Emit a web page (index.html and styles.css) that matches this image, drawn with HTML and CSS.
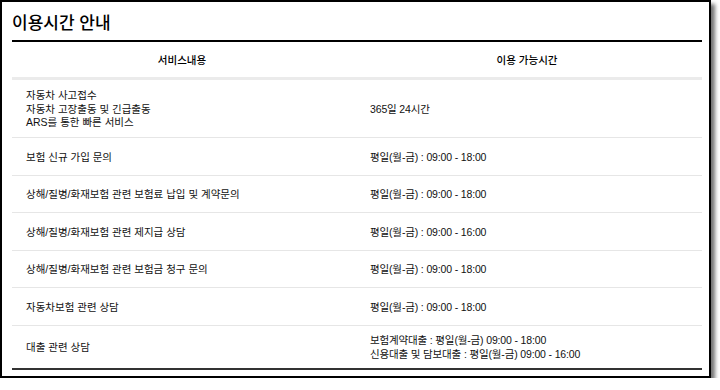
FILE: index.html
```html
<!DOCTYPE html>
<html lang="ko">
<head>
<meta charset="utf-8">
<link rel="stylesheet" href="styles.css">
</head>
<body>
<div class="frame">
  <h2 class="title">이용시간 안내</h2>
  <table class="hours">
    <thead>
      <tr><th class="c1">서비스내용</th><th class="c2">이용 가능시간</th></tr>
    </thead>
    <tbody>
      <tr class="tall"><td class="c1">자동차 사고접수<br>자동차 고장출동 및 긴급출동<br>ARS를 통한 빠른 서비스</td><td class="c2">365일 24시간</td></tr>
      <tr><td class="c1">보험 신규 가입 문의</td><td class="c2">평일(월-금) : 09:00 - 18:00</td></tr>
      <tr><td class="c1">상해/질병/화재보험 관련 보험료 납입 및 계약문의</td><td class="c2">평일(월-금) : 09:00 - 18:00</td></tr>
      <tr><td class="c1">상해/질병/화재보험 관련 제지급 상담</td><td class="c2">평일(월-금) : 09:00 - 16:00</td></tr>
      <tr><td class="c1">상해/질병/화재보험 관련 보험금 청구 문의</td><td class="c2">평일(월-금) : 09:00 - 18:00</td></tr>
      <tr><td class="c1">자동차보험 관련 상담</td><td class="c2">평일(월-금) : 09:00 - 18:00</td></tr>
      <tr class="last"><td class="c1">대출 관련 상담</td><td class="c2">보험계약대출 : 평일(월-금) 09:00 - 18:00<br>신용대출 및 담보대출 : 평일(월-금) 09:00 - 16:00</td></tr>
    </tbody>
  </table>
</div>
</body>
</html>
```

FILE: styles.css
```css
html, body {
  margin: 0;
  padding: 0;
  background: #fff;
}
body {
  font-family: "Liberation Sans", "Noto Sans CJK KR", sans-serif;
  color: #111;
}
.frame {
  box-sizing: border-box;
  width: 711px;
  height: 378px;
  border: 2px solid #000;
  padding: 0 0 0 10px;
  box-shadow: 4px 4px 4px rgba(0, 0, 0, 0.55);
}
.title {
  margin: 0;
  padding-top: 9px;
  height: 38px;
  box-sizing: border-box;
  font-family: "Noto Sans CJK KR", sans-serif;
  font-size: 17px;
  font-weight: 500;
  line-height: 22px;
  color: #000;
}
.hours {
  width: 690px;
  border-collapse: collapse;
  border-top: 2px solid #000;
  border-bottom: 2px solid #333;
  font-size: 10.5px;
  line-height: 13.5px;
}
.hours th {
  height: 35px;
  padding: 0;
  font-family: "Noto Sans CJK KR", sans-serif;
  font-weight: 500;
  font-size: 10.5px;
  text-align: center;
  border-bottom: 3px solid #ebebeb;
  color: #000;
}
.hours th.c1 { width: 340px; }
.hours td {
  height: 34.6px;
  padding: 2px 0 0;
  border-bottom: 1px solid #e6e6e6;
  vertical-align: middle;
  text-align: left;
}
.hours td.c1 { padding-left: 14px; }
.hours td.c2 { padding-left: 18px; letter-spacing: -0.15px; }
.hours tr.tall td { height: 55px; }
.hours tr.last td { height: 40px; border-bottom: none; }
```
